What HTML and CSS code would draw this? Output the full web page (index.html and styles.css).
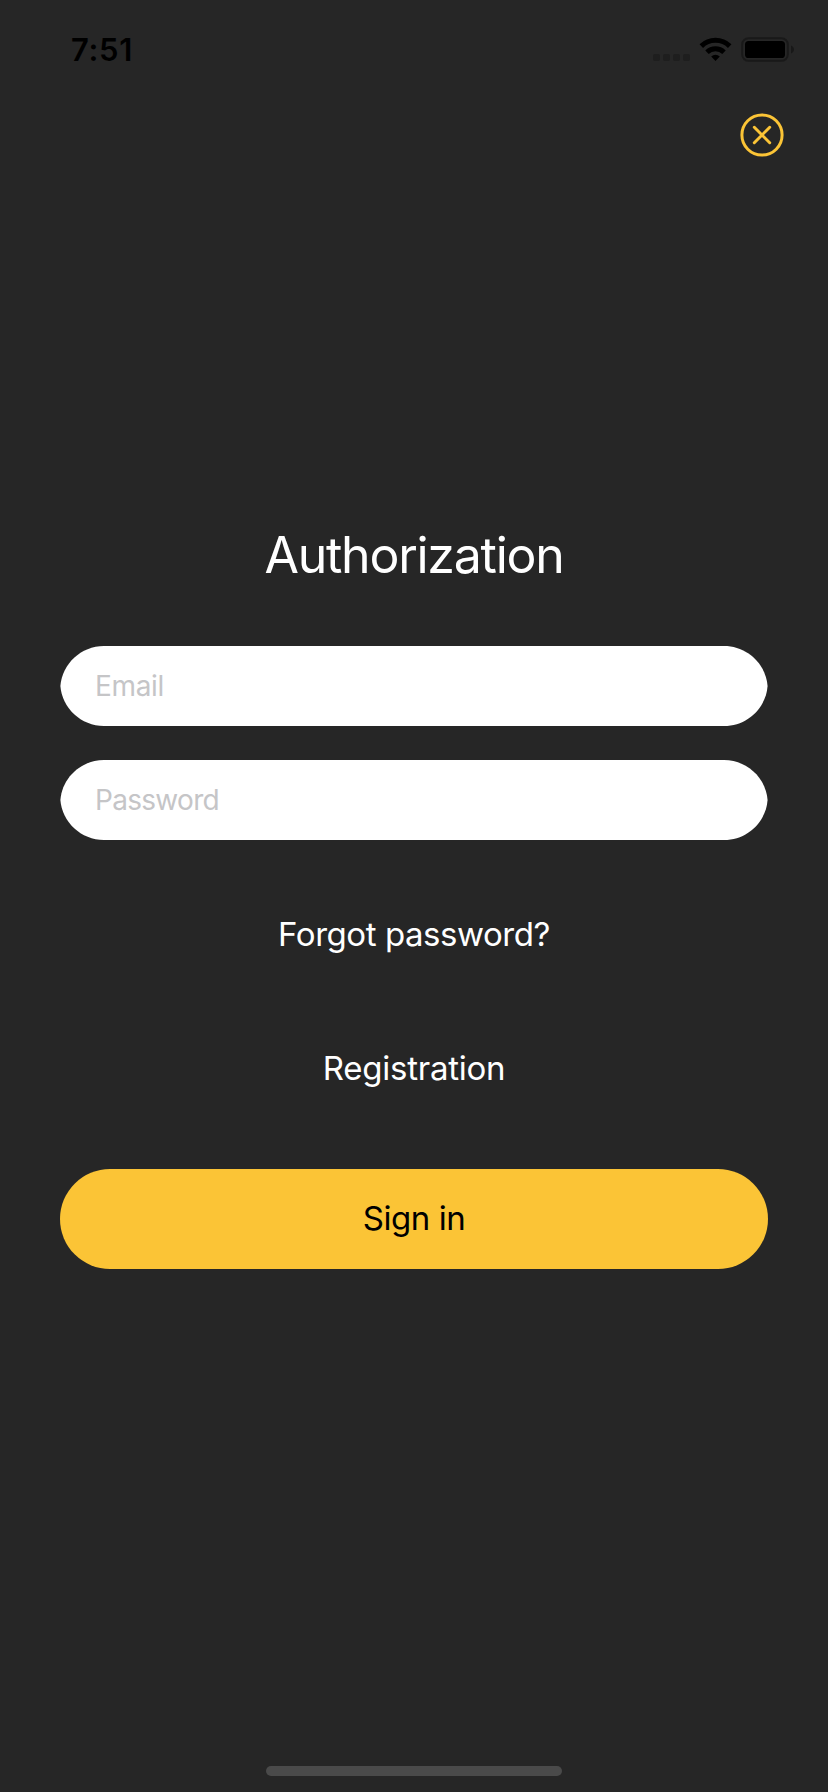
FILE: index.html
```html
<!DOCTYPE html>
<html lang="en">
<head>
<meta charset="utf-8">
<title>Authorization</title>
<link rel="stylesheet" href="styles.css">
</head>
<body>
<div class="screen">
  <header class="status">
    <span class="time">7:51</span>
    <svg class="status-icons" width="142" height="26" viewBox="0 0 142 26" aria-hidden="true">
      <g fill="#1e1e1e">
        <rect x="0" y="17" width="7" height="7" rx="1.8"/>
        <rect x="10" y="17" width="7" height="7" rx="1.8"/>
        <rect x="20" y="17" width="7" height="7" rx="1.8"/>
        <rect x="30" y="17" width="7" height="7" rx="1.8"/>
      </g>
      <g fill="none" stroke="#000" stroke-width="5">
        <path d="M48.3 9.1a20.2 20.2 0 0 1 28.4 0"/>
        <path d="M54 15.2a12.3 12.3 0 0 1 17 0"/>
      </g>
      <path d="M58.2 19.4a6.2 6.2 0 0 1 8.6 0L62.5 24z" fill="#000"/>
      <rect x="89.2" y="1.2" width="45.6" height="22.6" rx="6.4" fill="none" stroke="#191919" stroke-width="2"/>
      <rect x="92" y="4" width="40" height="17" rx="3.6" fill="#000"/>
      <path d="M138 8.5c4 1.4 4 6.6 0 8z" fill="#181818"/>
    </svg>
  </header>
  <div class="toolbar">
    <button class="close" aria-label="Close">
      <svg width="44" height="44" viewBox="0 0 44 44" fill="none" stroke="#fbc436" stroke-width="3" stroke-linecap="round">
        <circle cx="22" cy="22" r="20.1"/>
        <path d="M14.3 14.3l15.4 15.4M29.7 14.3L14.3 29.7"/>
      </svg>
    </button>
  </div>
  <main class="form">
    <h1 class="title">Authorization</h1>
    <input class="field email" type="email" placeholder="Email">
    <input class="field password" type="password" placeholder="Password">
    <a class="link forgot">Forgot password?</a>
    <a class="link register">Registration</a>
    <button class="submit">Sign in</button>
  </main>
  <div class="home-bar"></div>
</div>
</body>
</html>
```
FILE: styles.css
```css
* { box-sizing: border-box; }
body { margin: 0; background: #262626; font-family: Inter, "Liberation Sans", sans-serif; }
button { border: 0; padding: 0; background: none; font: inherit; }
.screen { display: flex; flex-direction: column; width: 828px; height: 1792px; padding-bottom: 16px; background: #262626; color: #fff; }
.status { display: flex; justify-content: space-between; align-items: flex-start; height: 113px; padding: 30px 33px 0 71px; color: #000; }
.time { font-size: 31px; line-height: 40px; font-weight: 600; letter-spacing: 0.7px; }
.status-icons { display: block; margin-top: 7px; }
.toolbar { display: flex; justify-content: flex-end; padding-right: 44px; }
.close { display: block; width: 44px; height: 44px; }
.close svg { display: block; }
.form { display: flex; flex-direction: column; margin-top: 368px; padding: 0 60px; text-align: center; }
.title { margin: 0; font-size: 50px; line-height: 60px; font-weight: 400; letter-spacing: -1.25px; }
.field { height: 80px; padding: 0 35px; border: 0; background: #fff; font: 400 28px Inter, sans-serif; outline: 0; clip-path: path("M44 0H664C687 0 706 18 707.6 40C706 62 687 80 664 80H44C21 80 2 62 .4 40C2 18 21 0 44 0Z"); }
.field::placeholder { color: #c5c5c7; opacity: 1; }
.email { margin-top: 61px; letter-spacing: -0.35px; }
.password { margin-top: 34px; letter-spacing: -0.7px; }
.link { font-size: 33px; line-height: 40px; }
.forgot { margin-top: 74px; letter-spacing: -0.45px; }
.register { margin-top: 94px; letter-spacing: -0.25px; }
.submit { height: 100px; margin-top: 81px; padding-bottom: 2px; border-radius: 50px; background: #fbc436; color: #000; font-size: 33px; letter-spacing: -0.45px; }
.home-bar { width: 296px; height: 10px; margin: auto auto 0; border-radius: 5px; background: #4a4a4a; }
```
